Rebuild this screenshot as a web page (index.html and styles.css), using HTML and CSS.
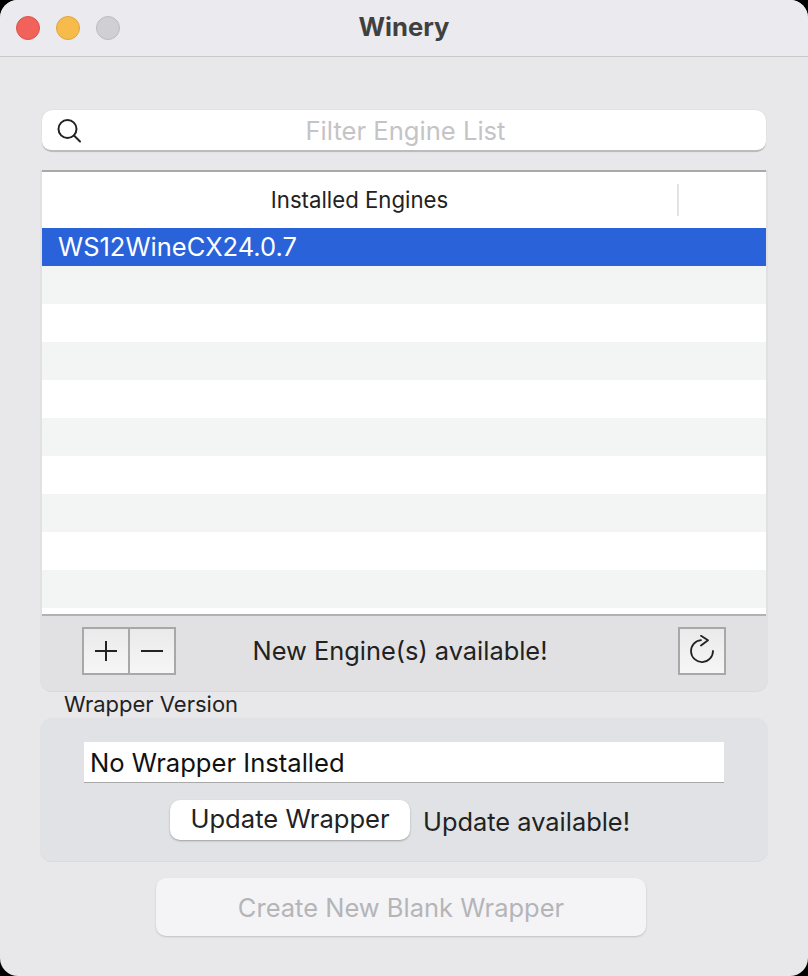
FILE: index.html
```html
<!DOCTYPE html>
<html lang="en">
<head>
    <meta charset="UTF-8">
    <title>Winery</title>
    <link rel="stylesheet" href="styles.css">
</head>
<body>
    <div class="window">
        <div class="titlebar">
            <div class="lights">
                <span class="light light-red"></span>
                <span class="light light-yellow"></span>
                <span class="light light-gray"></span>
            </div>
            <div class="title">Winery</div>
        </div>

        <div class="content">
            <div class="search">
                <svg class="search-icon" width="26" height="26" viewBox="0 0 26 26" fill="none" stroke="#222" stroke-width="2" stroke-linecap="round">
                    <circle cx="11.5" cy="12" r="9"/>
                    <path d="M18 18.5l6 6"/>
                </svg>
                <span class="search-text">Filter Engine List</span>
            </div>

            <div class="engines">
                <div class="table">
                    <div class="table-head">
                        <div class="head-label">Installed Engines</div>
                        <div class="head-extra"></div>
                    </div>
                    <div class="row row-selected">WS12WineCX24.0.7</div>
                    <div class="row row-alt"></div>
                    <div class="row"></div>
                    <div class="row row-alt"></div>
                    <div class="row"></div>
                    <div class="row row-alt"></div>
                    <div class="row"></div>
                    <div class="row row-alt"></div>
                    <div class="row"></div>
                    <div class="row row-alt"></div>
                    <div class="row-end"></div>
                </div>
                <div class="engine-bar">
                    <div class="btn-pair">
                        <div class="square-btn">
                            <svg width="22" height="22" viewBox="0 0 22 22" stroke="#222" stroke-width="2"><path d="M11 1v20M0 11h22"/></svg>
                        </div>
                        <div class="square-btn square-btn-second">
                            <svg width="22" height="22" viewBox="0 0 22 22" stroke="#222" stroke-width="2"><path d="M0 11h22"/></svg>
                        </div>
                    </div>
                    <div class="engine-note">New Engine(s) available!</div>
                    <div class="square-btn">
                        <svg width="26" height="32" viewBox="0 0 26 32" fill="none" stroke="#222" stroke-width="1.8" stroke-linecap="round" stroke-linejoin="round">
                            <path d="M12 5.1A11 11 0 1 0 24 16"/>
                            <path d="M12 0.8l7 4.5-7 5.2"/>
                        </svg>
                    </div>
                </div>
            </div>

            <div class="section-label">Wrapper Version</div>
            <div class="wrapper-panel">
                <div class="wrapper-field">No Wrapper Installed</div>
                <div class="wrapper-actions">
                    <div class="pill-btn">Update Wrapper</div>
                    <div class="update-note">Update available!</div>
                </div>
            </div>

            <div class="create-btn">Create New Blank Wrapper</div>
        </div>
    </div>
</body>
</html>
```

FILE: styles.css
```css
html, body {
    margin: 0;
    padding: 0;
    background-color: #000;
}

body {
    width: 808px;
    height: 976px;
    overflow: hidden;
    font-family: 'Inter', 'Liberation Sans', sans-serif;
    color: #222;
}

.window {
    height: 976px;
    box-sizing: border-box;
    background-color: #e8e8ea;
    border-radius: 18px;
    overflow: hidden;
}

.titlebar {
    height: 56px;
    display: flex;
    align-items: center;
    justify-content: center;
    position: relative;
    background-color: #ebebef;
    border-bottom: 1px solid #c9c9cb;
}

.lights {
    position: absolute;
    left: 16px;
    top: 16px;
    display: flex;
    gap: 16px;
}

.light {
    width: 24px;
    height: 24px;
    box-sizing: border-box;
    border-radius: 50%;
    border: 1px solid transparent;
}

.light-red {
    background-color: #f0625a;
    border-color: #d9534d;
}

.light-yellow {
    background-color: #f6bb4b;
    border-color: #dfa53c;
}

.light-gray {
    background-color: #d0d0d4;
    border-color: #bcbcc0;
}

.title {
    font-size: 25.6px;
    font-weight: 700;
    color: #404040;
    margin-bottom: 3px;
}

.content {
    display: flex;
    flex-direction: column;
    align-items: center;
    padding-top: 53px;
}

.search {
    width: 724px;
    height: 42px;
    box-sizing: border-box;
    display: flex;
    align-items: center;
    position: relative;
    background-color: #fff;
    border-radius: 10px;
    border-bottom: 2px solid #bcbcbc;
    box-shadow: 0 0 1px rgba(0,0,0,0.2);
}

.search-icon {
    position: absolute;
    left: 14px;
    top: 7px;
}

.search-text {
    width: 100%;
    box-sizing: border-box;
    padding: 0 0 0 3px;
    text-align: center;
    font-size: 25.6px;
    color: #c4c4c6;
}

.engines {
    width: 728px;
    margin-top: 18px;
    background-color: #e1e1e3;
    border-radius: 0 0 12px 12px;
    border-bottom: 1px solid #dadadc;
}

.table {
    margin: 0 2px;
    background-color: #fff;
    border-top: 2px solid #a9a9a9;
    border-bottom: 2px solid #b2b2b2;
}

.table-head {
    height: 56px;
    display: flex;
    align-items: center;
}

.head-label {
    width: 635px;
    height: 32px;
    line-height: 32px;
    text-align: center;
    font-size: 22.2px;
    border-right: 2px solid #e2e2e2;
}

.row {
    height: 38px;
    box-sizing: border-box;
    padding-left: 16px;
    line-height: 38px;
    font-size: 25.5px;
    background-color: #fff;
}

.row-selected {
    background-color: #2a62d9;
    color: #fff;
}

.row-alt {
    background-color: #f3f5f4;
}

.row-end {
    height: 6px;
}

.engine-bar {
    height: 75px;
    box-sizing: border-box;
    display: flex;
    align-items: flex-start;
    padding: 11px 42px 0 42px;
}

.btn-pair {
    display: flex;
}

.square-btn {
    width: 48px;
    height: 48px;
    box-sizing: border-box;
    display: flex;
    align-items: center;
    justify-content: center;
    background: linear-gradient(#eaeaea, #f6f6f6);
    border: 2px solid #a8a8a8;
}

.square-btn-second {
    margin-left: -2px;
}

.engine-note {
    flex: 1;
    padding-right: 54px;
    text-align: center;
    font-size: 25.4px;
    line-height: 48px;
}

.section-label {
    width: 728px;
    box-sizing: border-box;
    padding-left: 24px;
    height: 26px;
    line-height: 24px;
    font-size: 22px;
}

.wrapper-panel {
    width: 728px;
    height: 144px;
    box-sizing: border-box;
    padding-top: 24px;
    background-color: #e1e2e5;
    border-radius: 12px;
    border-bottom: 1px solid #dadadc;
    display: flex;
    flex-direction: column;
    align-items: center;
}

.wrapper-field {
    width: 640px;
    height: 41px;
    box-sizing: border-box;
    padding-left: 6px;
    line-height: 41px;
    font-size: 25.6px;
    color: #111;
    background-color: #fff;
    border-bottom: 1px solid #a9a9a9;
}

.wrapper-actions {
    display: flex;
    align-items: center;
    margin-top: 17px;
    margin-right: 8px;
}

.pill-btn {
    width: 240px;
    height: 40px;
    line-height: 38px;
    text-align: center;
    font-size: 25.6px;
    background-color: #fff;
    border-radius: 10px;
    box-shadow: 0 1px 2px rgba(0,0,0,0.3);
}

.update-note {
    margin-left: 13px;
    margin-top: 2px;
    font-size: 25.4px;
}

.create-btn {
    width: 490px;
    height: 58px;
    margin-top: 16px;
    margin-right: 6px;
    line-height: 60px;
    text-align: center;
    font-size: 25.5px;
    color: #b5b5b8;
    background-color: #f4f4f6;
    border-radius: 10px;
    box-shadow: 0 1px 2px rgba(0,0,0,0.18);
}
```
